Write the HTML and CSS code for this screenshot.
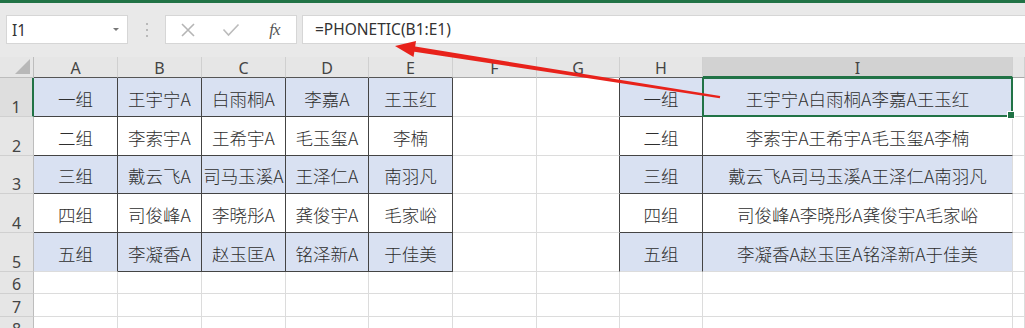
FILE: index.html
```html
<!DOCTYPE html>
<html lang="zh-CN">

<head>
  <meta charset="UTF-8">
  <title>PHONETIC</title>
  <link rel="stylesheet" href="styles.css">
</head>

<body>
  <div class="window">
    <div class="toolbar">
      <div class="name-box">
        <span>I1</span>
        <span class="caret"></span>
      </div>
      <div class="grip"><i></i><i></i><i></i></div>
      <div class="fx-box">
        <span>
          <svg width="16" height="16" viewBox="0 0 16 16">
            <path d="M2 2 L14 14 M14 2 L2 14" stroke="#b5b5b5" stroke-width="1.6" fill="none" />
          </svg>
        </span>
        <span>
          <svg width="18" height="14" viewBox="0 0 18 14">
            <path d="M1.5 6.5 L6.5 12 L16.5 1.5" stroke="#bcbcbc" stroke-width="1.6" fill="none" />
          </svg>
        </span>
        <span class="fx">fx</span>
      </div>
      <div class="formula">=PHONETIC(B1:E1)</div>
    </div>

    <div class="sheet" id="sheet">
      <!-- cells are built below -->
    </div>

    <svg class="arrow" width="1025" height="328" viewBox="0 0 1025 328">
      <polygon points="395,46 416,41 415.2,46.6 720.2,96 719.8,98.2 414.4,51.8 413.5,57" fill="#e8221b" />
    </svg>
  </div>

  <script>
    const letters = ["A", "B", "C", "D", "E", "F", "G", "H", "I", "J"];
    const groups = ["一组", "二组", "三组", "四组", "五组"];
    const names = [
      ["王宇宁A", "白雨桐A", "李嘉A", "王玉红"],
      ["李索宇A", "王希宇A", "毛玉玺A", "李楠"],
      ["戴云飞A", "司马玉溪A", "王泽仁A", "南羽凡"],
      ["司俊峰A", "李晓彤A", "龚俊宇A", "毛家峪"],
      ["李凝香A", "赵玉匡A", "铭泽新A", "于佳美"]
    ];

    function cell(text, cls) {
      return `<div class="cell ${cls}">${text}</div>`;
    }

    let html = `<div class="corner"><span></span></div>`;
    letters.forEach(l => {
      let cls = "col-head";
      if ("ABCDEH".includes(l)) cls += " head-dark";
      if (l === "I") cls += " col-selected";
      html += `<div class="${cls}">${l === "J" ? "" : l}</div>`;
    });

    for (let r = 1; r <= 8; r++) {
      html += `<div class="row-head${r === 1 ? " row-selected" : ""}">${r}</div>`;
      if (r <= 5) {
        const row = names[r - 1];
        const fill = r % 2 === 1 ? " fill" : "";
        const last = r === 5 ? "" : " dark-b";
        html += cell(groups[r - 1], "dark-r" + fill + last);
        row.forEach(n => html += cell(n, "dark-r dark-b" + fill));
        html += cell("", "");
        html += cell("", "dark-r");
        html += cell(groups[r - 1], "dark-r" + fill + last);
        html += cell(row.join(""), fill.trim() + last + (r === 1 ? " active" : ""));
        html += cell("", "");
      } else {
        letters.forEach(() => html += cell("", ""));
      }
    }

    document.getElementById("sheet").innerHTML = html;
  </script>
</body>

</html>
```

FILE: styles.css
```css
* {
  box-sizing: border-box;
}

body {
  margin: 0;
  font-family: "Noto Sans", "Noto Sans CJK SC", sans-serif;
  background-color: #fff;
  overflow: hidden;
}

.window {
  position: relative;
  width: 1025px;
  height: 328px;
  overflow: hidden;
}

/* formula bar */
.toolbar {
  height: 57px;
  background-color: #e9e9e9;
  border-top: 3px solid #217346;
  display: flex;
  align-items: flex-start;
  padding: 12px 0 0 6px;
}

.name-box {
  width: 122px;
  height: 29px;
  background: #fff;
  border: 1px solid #d6d6d6;
  display: flex;
  align-items: center;
  justify-content: space-between;
  padding: 0 8px 0 5px;
  font-size: 15.5px;
  color: #333;
}

.caret {
  width: 0;
  height: 0;
  border-left: 3px solid transparent;
  border-right: 3px solid transparent;
  border-top: 3px solid #777;
}

.grip {
  width: 37px;
  height: 29px;
  display: flex;
  flex-direction: column;
  align-items: center;
  justify-content: center;
  gap: 4px;
}

.grip i {
  width: 2px;
  height: 2px;
  background: #a8a8a8;
  border-radius: 1px;
}

.fx-box {
  width: 132px;
  height: 29px;
  background: #fff;
  border: 1px solid #d6d6d6;
  display: flex;
}

.fx-box span {
  width: 44px;
  display: flex;
  align-items: center;
  justify-content: center;
}

.fx {
  font-family: "Liberation Serif", serif;
  font-style: italic;
  font-size: 17px;
  color: #555;
  letter-spacing: -1px;
}

.formula {
  flex: 1;
  margin-left: 5px;
  height: 29px;
  background: #fff;
  border: 1px solid #d6d6d6;
  border-right: none;
  padding-left: 12px;
  font-size: 15.5px;
  line-height: 27px;
  color: #333;
}

/* grid */
.sheet {
  display: grid;
  grid-template-columns: 34px 84px 84px 84px 83px 84px 84px 83px 83px 310px 1fr;
  grid-template-rows: 21px 39px 39px 38px 39px 39px 22px 23px 22px;
}

.corner {
  background: #e6e6e6;
  border-right: 1px solid #bdbdbd;
  border-bottom: 1px solid #bdbdbd;
  position: relative;
}

.corner span {
  position: absolute;
  right: 3px;
  bottom: 3px;
  width: 0;
  height: 0;
  border-left: 15px solid transparent;
  border-bottom: 15px solid #b8b8b8;
}

.col-head {
  background: #e6e6e6;
  border-right: 1px solid #d0d0d0;
  border-bottom: 1px solid #a9a9a9;
  display: flex;
  align-items: flex-end;
  justify-content: center;
  font-size: 16px;
  line-height: 1;
  padding-bottom: 1px;
  color: #444;
}

.head-dark {
  border-bottom-color: #555;
}

.col-selected {
  background: #d2d2d2;
  border-bottom: 2px solid #217346;
  padding-bottom: 0;
}

.row-head {
  background: #e6e6e6;
  border-right: 1px solid #bdbdbd;
  border-bottom: 1px solid #d0d0d0;
  display: flex;
  align-items: flex-end;
  justify-content: center;
  font-size: 16px;
  line-height: 1;
  padding-bottom: 1px;
  color: #444;
}

.row-selected {
  background: #dedede;
  border-right: 2px solid #217346;
}

.cell {
  border-right: 1px solid #dcdcdc;
  border-bottom: 1px solid #dcdcdc;
  display: flex;
  align-items: center;
  justify-content: center;
  padding-top: 2px;
  font-family: "Noto Sans CJK SC", sans-serif;
  font-size: 17.5px;
  font-weight: 300;
  color: #2e2e2e;
  white-space: nowrap;
  overflow: hidden;
}

.fill {
  background-color: #d9e1f2;
}

.dark-r {
  border-right-color: #444;
}

.dark-b {
  border-bottom-color: #444;
}

.active {
  position: relative;
  overflow: visible;
}

.active::after {
  content: "";
  position: absolute;
  left: -1px;
  top: -1px;
  right: -1px;
  bottom: -1px;
  border: 2px solid #217346;
}

.active::before {
  content: "";
  position: absolute;
  right: -3px;
  bottom: -3px;
  width: 6px;
  height: 6px;
  background: #217346;
  border: 1px solid #fff;
  z-index: 1;
}

.arrow {
  position: absolute;
  left: 0;
  top: 0;
  pointer-events: none;
}
```
